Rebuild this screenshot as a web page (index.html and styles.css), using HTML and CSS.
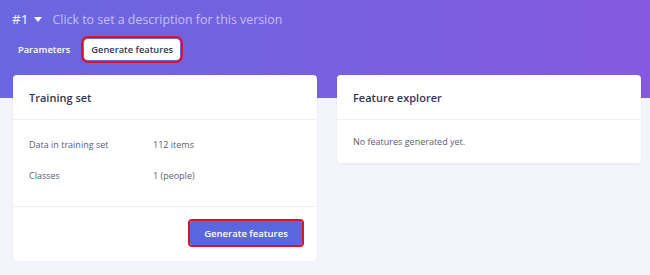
FILE: index.html
```html
<!DOCTYPE html>
<html lang="en">
<head>
    <meta charset="UTF-8">
    <title>Version</title>
    <link rel="stylesheet" href="styles.css">
</head>
<body>
    <div class="hero">
        <div class="title-row">
            <span class="version">#1</span>
            <span class="caret"></span>
            <span class="description">Click to set a description for this version</span>
        </div>
        <div class="tabs">
            <span class="tab">Parameters</span>
            <span class="tab active">Generate features</span>
        </div>
    </div>

    <div class="cards">
        <div class="card">
            <div class="card-header">Training set</div>
            <div class="card-body">
                <div class="row">
                    <span class="label">Data in training set</span>
                    <span class="value">112 items</span>
                </div>
                <div class="row">
                    <span class="label">Classes</span>
                    <span class="value">1 (people)</span>
                </div>
            </div>
            <div class="card-footer">
                <button class="primary">Generate features</button>
            </div>
        </div>

        <div class="card">
            <div class="card-header">Feature explorer</div>
            <div class="card-body short">
                <p class="empty">No features generated yet.</p>
            </div>
        </div>
    </div>
</body>
</html>
```

FILE: styles.css
```css
body {
    margin: 0;
    font-family: "Open Sans", Arial, sans-serif;
    background: #f4f5fa;
    color: #3a3d55;
}

.hero {
    background: linear-gradient(90deg, #6a67e0, #8459e0);
    height: 98px;
    padding: 9px 12px 0;
    box-sizing: border-box;
    color: white;
}

.title-row {
    display: flex;
    align-items: center;
    height: 20px;
    font-size: 13.5px;
}

.caret {
    width: 0;
    height: 0;
    border-left: 4px solid transparent;
    border-right: 4px solid transparent;
    border-top: 5px solid white;
    margin: 0 10px 0 6px;
}

.description {
    font-size: 12.4px;
    color: rgba(255, 255, 255, 0.6);
}

.tabs {
    display: flex;
    align-items: center;
    gap: 14px;
    margin-top: 10px;
    padding-left: 6px;
    font-size: 9.3px;
    font-weight: 600;
}

.tab {
    padding: 4px 0;
}

.tab.active {
    background: white;
    color: #333650;
    padding: 4px 7px;
    border-radius: 4px;
    outline: 2px solid #d9132d;
    outline-offset: 1px;
}

.cards {
    display: flex;
    align-items: flex-start;
    gap: 20px;
    margin: -23px 9px 0 13px;
}

.card {
    flex: 1;
    background: white;
    border-radius: 4px;
    box-shadow: 0 1px 3px rgba(40, 40, 90, 0.06);
}

.card-header {
    height: 44px;
    padding: 0 16px;
    display: flex;
    align-items: center;
    font-size: 11px;
    font-weight: 600;
    color: #333650;
    border-bottom: 1px solid #f0f1f6;
}

.card-body {
    padding: 9px 16px 15px;
    font-size: 9px;
    color: #5a5d72;
}

.card-body.short {
    padding-bottom: 13px;
}

.row {
    display: flex;
    height: 31px;
    align-items: center;
}

.label {
    width: 124px;
}

.empty {
    margin: 5px 0 0;
    line-height: 16px;
}

.card-footer {
    border-top: 1px solid #eeeff4;
    padding: 14px 15px 16px;
    display: flex;
    justify-content: flex-end;
}

.primary {
    background: #5b67e0;
    color: white;
    border: none;
    border-radius: 2px;
    font-family: inherit;
    font-size: 9.5px;
    font-weight: 600;
    width: 112px;
    height: 24px;
    outline: 2px solid #d9132d;
    outline-offset: 0;
}
```
